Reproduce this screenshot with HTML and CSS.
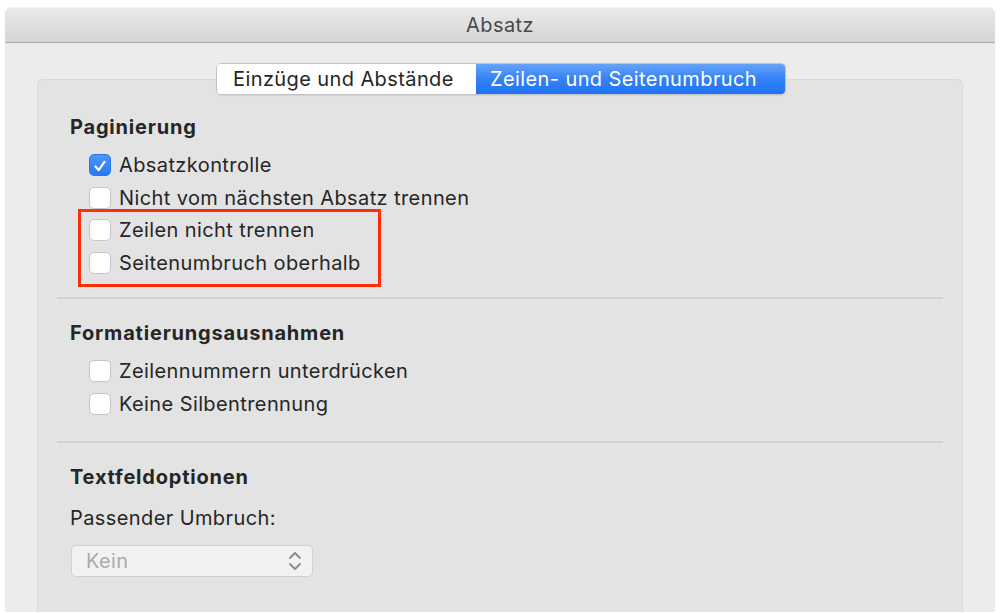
FILE: index.html
```html
<!DOCTYPE html>
<html lang="de">
<head>
<meta charset="utf-8">
<title>Absatz</title>
<link rel="stylesheet" href="styles.css">
</head>
<body>
<div class="window">
  <div class="titlebar">Absatz</div>
  <div class="content">
    <div class="tabs">
      <div class="tab tab-left">Einzüge und Abstände</div>
      <div class="tab tab-right">Zeilen- und Seitenumbruch</div>
    </div>
    <div class="panel">
      <section class="section first">
        <h2 class="heading">Paginierung</h2>
        <div class="rows">
          <label class="row"><span class="box checked"><svg viewBox="0 0 22 22" width="22" height="22"><path d="M6 11.5 L9.5 15.5 L16 6.5" fill="none" stroke="#fff" stroke-width="2.4" stroke-linecap="round" stroke-linejoin="round"/></svg></span><span class="txt">Absatzkontrolle</span></label>
          <label class="row"><span class="box"></span><span class="txt">Nicht vom nächsten Absatz trennen</span></label>
          <div class="highlight">
            <label class="row"><span class="box"></span><span class="txt">Zeilen nicht trennen</span></label>
            <label class="row"><span class="box"></span><span class="txt">Seitenumbruch oberhalb</span></label>
          </div>
        </div>
      </section>
      <hr class="sep sep1">
      <section class="section">
        <h2 class="heading">Formatierungsausnahmen</h2>
        <div class="rows">
          <label class="row"><span class="box"></span><span class="txt">Zeilennummern unterdrücken</span></label>
          <label class="row"><span class="box"></span><span class="txt">Keine Silbentrennung</span></label>
        </div>
      </section>
      <hr class="sep sep2">
      <section class="section">
        <h2 class="heading">Textfeldoptionen</h2>
        <div class="field-label">Passender Umbruch:</div>
        <div class="select">
          <span class="select-text">Kein</span>
          <svg class="chev" viewBox="0 0 14 22" width="14" height="22"><path d="M2 8 L7 3 L12 8 M2 14 L7 19 L12 14" fill="none" stroke="#8a8a8a" stroke-width="1.8" stroke-linecap="round" stroke-linejoin="round"/></svg>
        </div>
      </section>
    </div>
  </div>
</div>
</body>
</html>
```

FILE: styles.css
```css
* { box-sizing: border-box; }
html, body { margin: 0; padding: 0; background: #ffffff; }
body {
  font-family: Inter, "Noto Sans", "Liberation Sans", sans-serif;
  color: #262626;
  height: 613px;
  overflow: hidden;
  letter-spacing: 0.4px;
}
.window {
  margin: 7px 5px 0 5px;
  height: 605px;
  display: flex;
  flex-direction: column;
  background: #ececec;
  border-radius: 7px 7px 0 0;
  overflow: hidden;
}
.titlebar {
  height: 36px;
  flex: none;
  background: linear-gradient(#eaeaea, #d5d5d5);
  border-bottom: 1px solid #acacac;
  border-top: 1px solid #f4f4f4;
  display: flex;
  align-items: center;
  justify-content: center;
  font-size: 20px;
  color: #4a4a4a;
  padding-bottom: 1px;
}
.content {
  flex: 1;
  display: flex;
  flex-direction: column;
  padding: 20px 32px 0 32px;
}
.tabs {
  align-self: flex-start;
  margin-left: 179px;
  display: flex;
  height: 32px;
  border: 1px solid #c3c3c3;
  border-radius: 5px;
  overflow: hidden;
  position: relative;
  z-index: 1;
  box-shadow: 0 1px 1px rgba(0,0,0,0.08);
}
.tab {
  display: flex;
  align-items: center;
  font-size: 20px;
  height: 100%;
}
.tab-left {
  width: 259px;
  background: #ffffff;
  color: #262626;
  padding-left: 16px;
}
.tab-right {
  width: 309px;
  background: linear-gradient(#66a3f9, #3482f6 50%, #1e72f4);
  color: #ffffff;
  padding-left: 14px;
}
.panel {
  flex: 1;
  margin-top: -16px;
  background: #e3e3e3;
  border: 1px solid #d9d9d9;
  border-bottom: none;
  border-radius: 6px 6px 0 0;
  padding: 35px 19px 0 19px;
}
.heading {
  margin: 0 0 0 13px;
  font-size: 20px;
  line-height: 24px;
  font-weight: 700;
  color: #262626;
  letter-spacing: 0.8px;
}
.rows {
  margin-top: 9px;
  display: flex;
  flex-direction: column;
}
.row {
  height: 33px;
  display: flex;
  align-items: center;
  padding-left: 32px;
  font-size: 20px;
}
.box {
  width: 22px;
  height: 22px;
  border-radius: 5px;
  background: #ffffff;
  border: 1px solid #c6c6c6;
  margin-right: 8px;
  flex: none;
  display: flex;
}
.box.checked {
  background: linear-gradient(#4e95f8, #2779f5);
  border-color: #2a78ee;
}
.highlight {
  margin-top: -5px;
  margin-left: 21px;
  width: 303px;
  border: 3px solid #ff2d0a;
  padding: 1px 0 5px 0;
}
.highlight .row { padding-left: 8px; }
.sep {
  margin: 10px 0 0 0;
  border: none;
  height: 2px;
  background: #d3d3d3;
}
.sep2 { margin-top: 21px; }
.sep + .section { margin-top: 22px; }
.field-label {
  margin: 17px 0 0 13px;
  font-size: 20px;
  line-height: 24px;
}
.select {
  margin: 15px 0 0 14px;
  width: 242px;
  height: 32px;
  background: #f2f2f2;
  border: 1px solid #d0d0d0;
  border-radius: 5px;
  display: flex;
  align-items: center;
  justify-content: space-between;
  padding: 0 10px 0 14px;
  font-size: 20px;
  color: #ababab;
}
.chev { display: block; }
```
